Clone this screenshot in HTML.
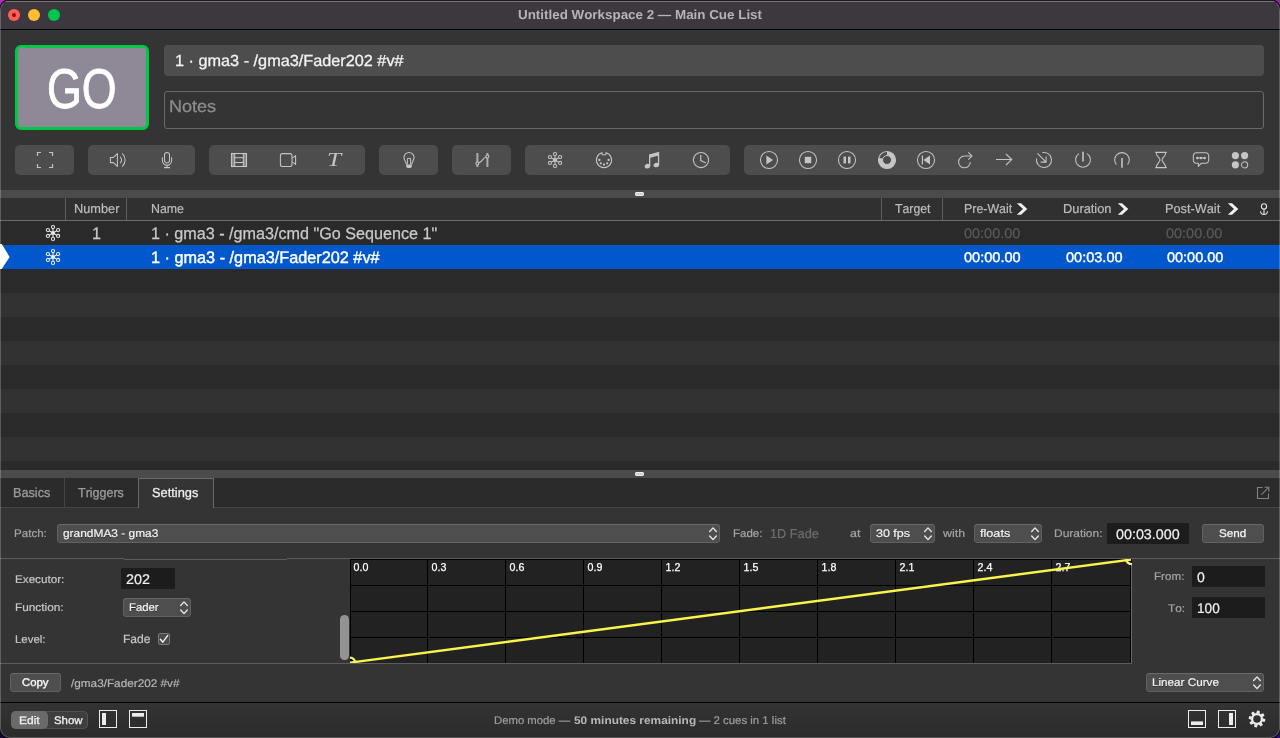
<!DOCTYPE html>
<html lang="en">
<head>
<meta charset="utf-8">
<title>Untitled Workspace 2 — Main Cue List</title>
<style>
*{box-sizing:border-box;margin:0;padding:0}
html,body{width:1280px;height:738px;overflow:hidden;background:#000}
body{font-family:"Liberation Sans",sans-serif;font-size:13px;color:#dcdcdc;position:relative}
.desk{position:absolute;left:0;top:0;width:1280px;height:738px;background:#000}
.desk i{position:absolute;width:14px;height:14px}
.win{position:absolute;left:0;top:0;width:1280px;height:738px;background:#343434;border-radius:10px;overflow:hidden;will-change:transform}
.win div,.win svg,.win span.a{position:absolute}
.edge{position:absolute;left:0;top:0;width:1280px;height:738px;border-radius:10px;border:1px solid rgba(255,255,255,.22);border-top-color:transparent;pointer-events:none;box-shadow:0 0 0 1px rgba(0,0,0,.85)}
.t{white-space:pre;line-height:1;transform-origin:0 50%;text-rendering:geometricPrecision;font-kerning:none}
svg{overflow:visible}
.pop{background:#4e4e4e;border-radius:4px;box-shadow:0 0 0 .5px rgba(255,255,255,.22) inset,0 .5px 0 rgba(255,255,255,.12) inset}
.fld{background:#1c1c1c}
</style>
</head>
<body>
<div class="desk"><i style="left:0;top:0;background:#b12cb6"></i><i style="right:0;top:0;background:#8a2a9a"></i><i style="left:0;bottom:0;background:#160a30"></i><i style="right:0;bottom:0;background:#2a0f6e"></i></div>
<div class="win">
<div style="left:0px;top:0px;width:1280px;height:29px;background:#3d373f;"></div>
<div style="left:0px;top:0px;width:1280px;height:1px;background:#1a1a1a;"></div>
<div style="left:0px;top:1px;width:1280px;height:1px;background:#77727a;"></div>
<div style="left:0px;top:29px;width:1280px;height:1px;background:#000;"></div>
<div style="left:8px;top:9px;width:12px;height:12px;background:#ff5f57;border-radius:50%;"></div>
<div style="left:28px;top:9px;width:12px;height:12px;background:#febc2e;border-radius:50%;"></div>
<div style="left:48px;top:9px;width:12px;height:12px;background:#00c650;border-radius:50%;"></div>
<div style="left:12px;top:13px;width:4px;height:4px;background:#8c0a0a;border-radius:50%;"></div>
<div class="t" style="left:517.80px;top:8.00px;font-size:13px;color:#b7b3b9;font-weight:bold;transform:scaleX(1.0299);">Untitled Workspace 2 — Main Cue List</div>
<div style="left:15px;top:45px;width:134px;height:85px;background:#8f8997;border:3px solid #00c846;border-radius:6px;"></div>
<div class="t" style="left:46.96px;top:61.00px;font-size:56px;color:#fff;transform:scaleX(0.7999);-webkit-text-stroke:0.9px #fff;">GO</div>
<div style="left:164px;top:45px;width:1100px;height:31px;background:#4d4d4d;border-radius:4px;"></div>
<div class="t" style="left:174.78px;top:54.00px;font-size:16px;color:#f2f2f2;transform:scaleX(1.0157);-webkit-text-stroke:0.3px #f2f2f2;">1 · gma3 - /gma3/Fader202 #v#</div>
<div style="left:164px;top:91px;width:1100px;height:38px;border:1px solid #6a6a6a;border-radius:3px;"></div>
<div class="t" style="left:168.66px;top:98.00px;font-size:17px;color:#8c8c8c;transform:scaleX(1.0609);-webkit-text-stroke:0.3px #8c8c8c;">Notes</div>
<div style="left:15px;top:145px;width:59px;height:30px;background:#4d4d4d;border-radius:5px;"></div>
<div style="left:88px;top:145px;width:107px;height:30px;background:#4d4d4d;border-radius:5px;"></div>
<div style="left:209px;top:145px;width:156px;height:30px;background:#4d4d4d;border-radius:5px;"></div>
<div style="left:379px;top:145px;width:59px;height:30px;background:#4d4d4d;border-radius:5px;"></div>
<div style="left:452px;top:145px;width:59px;height:30px;background:#4d4d4d;border-radius:5px;"></div>
<div style="left:525px;top:145px;width:205px;height:30px;background:#4d4d4d;border-radius:5px;"></div>
<div style="left:744px;top:145px;width:520px;height:30px;background:#4d4d4d;border-radius:5px;"></div>
<div class="t" style="left:327.15px;top:150.07px;font-size:20px;color:#c4c4c4;transform:scaleX(1.2727);font-family:'Liberation Serif',serif;font-style:italic;-webkit-text-stroke:0;">T</div>
<svg style="left:33.0px;top:148.0px" width="24" height="24" viewBox="-12.0 -12.0 24 24" fill="none" stroke="#c5c5c5" stroke-width="1.2" stroke-linecap="butt" stroke-linejoin="miter"><path d="M-7.5,-4 V-7.5 H-4 M4,-7.5 H7.5 V-4 M7.5,4 V7.5 H4 M-4,7.5 H-7.5 V4"/></svg>
<svg style="left:106.0px;top:148.0px" width="24" height="24" viewBox="-12.0 -12.0 24 24" fill="none" stroke="#c5c5c5" stroke-width="1.05" stroke-linecap="butt" stroke-linejoin="miter"><path d="M-7.6,-2.6 H-4.6 L-0.6,-6.4 V6.4 L-4.6,2.6 H-7.6 Z" stroke-linejoin="round"/><path d="M2.2,-3.2 A4.5,4.5 0 0 1 2.2,3.2"/><path d="M4.2,-6.6 A9,9 0 0 1 4.2,6.6"/></svg>
<svg style="left:155.0px;top:148.0px" width="24" height="24" viewBox="-12.0 -12.0 24 24" fill="none" stroke="#c5c5c5" stroke-width="1.05" stroke-linecap="butt" stroke-linejoin="miter"><rect x="-2.5" y="-7.5" width="5" height="10.4" rx="2.5"/><path d="M-4.6,-2.8 V0.6 A4.6,4.6 0 0 0 4.6,0.6 V-2.8"/><path d="M0,4.9 V7.6 M-3,7.6 H3"/></svg>
<svg style="left:227.0px;top:148.0px" width="24" height="24" viewBox="-12.0 -12.0 24 24" fill="none" stroke="#c5c5c5" stroke-width="1.05" stroke-linecap="butt" stroke-linejoin="miter"><rect x="-7.5" y="-6.5" width="15" height="13"/><rect x="-7.5" y="-6.5" width="3.2" height="13" fill="#c5c5c5" fill-opacity="0.5" /><rect x="4.3" y="-6.5" width="3.2" height="13" fill="#c5c5c5" fill-opacity="0.5" /><path d="M-4.3,-2.3 H4.3 M-4.3,2.5 H4.3" stroke-width="1"/></svg>
<svg style="left:276.0px;top:148.0px" width="24" height="24" viewBox="-12.0 -12.0 24 24" fill="none" stroke="#c5c5c5" stroke-width="1.05" stroke-linecap="butt" stroke-linejoin="miter"><rect x="-7.6" y="-6.4" width="11.6" height="12.8" rx="2"/><path d="M4.4,-1.8 L7.6,-4.4 V4.4 L4.4,1.8" stroke-linejoin="round"/></svg>
<svg style="left:397.0px;top:148.0px" width="24" height="24" viewBox="-12.0 -12.0 24 24" fill="none" stroke="#c5c5c5" stroke-width="1.05" stroke-linecap="butt" stroke-linejoin="miter"><path d="M-2.6,4.6 C-2.6,2 -5,0.6 -5,-2.6 A5,5 0 0 1 5,-2.6 C5,0.6 2.6,2 2.6,4.6"/><path d="M-2.9,4.6 H2.9 V6 Q2.9,8 0,8 Q-2.9,8 -2.9,6 Z" fill="#c5c5c5" stroke="none"/><path d="M-1.6,4.4 V-1.6 H1.6 V4.4" stroke-width="1"/></svg>
<svg style="left:470.5px;top:148.0px" width="24" height="24" viewBox="-12.0 -12.0 24 24" fill="none" stroke="#c5c5c5" stroke-width="1.05" stroke-linecap="butt" stroke-linejoin="miter"><rect x="-6.6" y="-7" width="2" height="14" fill="#c5c5c5" stroke="none" fill-opacity="0.8"/><rect x="3.4" y="-7" width="2" height="14" fill="#c5c5c5" stroke="none" fill-opacity="0.8"/><path d="M-5.6,3.4 C-1.5,3.4 0.5,-3.6 4.4,-3.6"/><circle cx="-5.6" cy="3.4" r="1.5" fill="#4d4d4d"/><circle cx="4.4" cy="-3.6" r="1.5" fill="#4d4d4d"/></svg>
<svg style="left:543.0px;top:148.0px" width="24" height="24" viewBox="-12.0 -12.0 24 24" fill="none" stroke="#c5c5c5" stroke-width="1.05" stroke-linecap="butt" stroke-linejoin="miter"><path d="M0,0 L0.00,-5.90"/><path d="M0,0 L-5.11,-2.95"/><path d="M0,0 L-5.11,2.95"/><path d="M0,0 L-0.00,5.90"/><path d="M0,0 L5.11,2.95"/><path d="M0,0 L5.11,-2.95"/><circle cx="0.00" cy="-5.90" r="1.60" fill="#4d4d4d"/><circle cx="-5.11" cy="-2.95" r="1.60" fill="#4d4d4d"/><circle cx="-5.11" cy="2.95" r="1.60" fill="#4d4d4d"/><circle cx="-0.00" cy="5.90" r="1.60" fill="#4d4d4d"/><circle cx="5.11" cy="2.95" r="1.60" fill="#4d4d4d"/><circle cx="5.11" cy="-2.95" r="1.60" fill="#4d4d4d"/><circle r="2.00" fill="#c5c5c5" stroke="none"/></svg>
<svg style="left:592.0px;top:148.0px" width="24" height="24" viewBox="-12.0 -12.0 24 24" fill="none" stroke="#c5c5c5" stroke-width="1.05" stroke-linecap="butt" stroke-linejoin="miter"><path d="M-2,-7.3 A7.6,7.6 0 1 0 2,-7.3"/><path d="M-2,-7.8 V-5.2 H2 V-7.8" stroke-width="1"/><g fill="#c5c5c5" stroke="none"><circle cx="-4.6" cy="0" r="1.15"/><circle cx="4.6" cy="0" r="1.15"/><circle cx="-3.2" cy="3.3" r="1.15"/><circle cx="3.2" cy="3.3" r="1.15"/><circle cx="0" cy="4.6" r="1.15"/></g></svg>
<svg style="left:640.0px;top:148.0px" width="24" height="24" viewBox="-12.0 -12.0 24 24" fill="none" stroke="#c5c5c5" stroke-width="1.05" stroke-linecap="butt" stroke-linejoin="miter"><path d="M-3,-5.6 L7.2,-8.2 V5 A2.9,2.2 -15 1 1 5.9,3 V-4.2 L-1.7,-2.3 V6.2 A2.9,2.2 -15 1 1 -3,4.2 Z" fill="#c5c5c5" stroke="none"/></svg>
<svg style="left:689.0px;top:148.0px" width="24" height="24" viewBox="-12.0 -12.0 24 24" fill="none" stroke="#c5c5c5" stroke-width="1.05" stroke-linecap="butt" stroke-linejoin="miter"><circle r="7.6"/><path d="M-1,-5 H0.4 V0 L5.2,2.6 L4.6,3.6 L-1,1 Z" fill="#c5c5c5" stroke="none" fill-opacity="0.85"/></svg>
<svg style="left:757.0px;top:148.0px" width="24" height="24" viewBox="-12.0 -12.0 24 24" fill="none" stroke="#c5c5c5" stroke-width="1.05" stroke-linecap="butt" stroke-linejoin="miter"><circle r="8.55"/><path d="M-2.6,-4.4 L4,0 L-2.6,4.4 Z" fill="#c5c5c5" stroke="none"/></svg>
<svg style="left:796.0px;top:148.0px" width="24" height="24" viewBox="-12.0 -12.0 24 24" fill="none" stroke="#c5c5c5" stroke-width="1.05" stroke-linecap="butt" stroke-linejoin="miter"><circle r="8.55"/><rect x="-3.2" y="-3.2" width="6.4" height="6.4" fill="#c5c5c5" stroke="none"/></svg>
<svg style="left:835.0px;top:148.0px" width="24" height="24" viewBox="-12.0 -12.0 24 24" fill="none" stroke="#c5c5c5" stroke-width="1.05" stroke-linecap="butt" stroke-linejoin="miter"><circle r="8.55"/><rect x="-3.5" y="-3.4" width="2.5" height="6.8" fill="#c5c5c5" stroke="none"/><rect x="1" y="-3.4" width="2.5" height="6.8" fill="#c5c5c5" stroke="none"/></svg>
<svg style="left:875.0px;top:148.0px" width="24" height="24" viewBox="-12.0 -12.0 24 24" fill="none" stroke="#c5c5c5" stroke-width="1.05" stroke-linecap="butt" stroke-linejoin="miter"><circle r="8.55"/><path d="M0,-8.6 A8.6,8.6 0 1 1 -8.2,-2.6 L-4.3,-1.3 A4.5,4.5 0 1 0 0,-4.5 Z" fill="#c5c5c5" stroke="none"/><circle r="4.5" stroke-width="1"/></svg>
<svg style="left:914.0px;top:148.0px" width="24" height="24" viewBox="-12.0 -12.0 24 24" fill="none" stroke="#c5c5c5" stroke-width="1.05" stroke-linecap="butt" stroke-linejoin="miter"><circle r="8.55"/><path d="M4,-4.4 L-2.6,0 L4,4.4 Z" fill="#c5c5c5" stroke="none"/><path d="M-3.6,-4.4 V4.4" stroke-width="1.2"/></svg>
<svg style="left:953.0px;top:148.0px" width="24" height="24" viewBox="-12.0 -12.0 24 24" fill="none" stroke="#c5c5c5" stroke-width="1.05" stroke-linecap="butt" stroke-linejoin="miter"><path d="M5.25,1.9 A5.85,5.85 0 1 1 -0.6,-3.95 H6.8"/><path d="M3.3,-7.6 L7,-3.95 L3.3,-0.4" /></svg>
<svg style="left:992.0px;top:148.0px" width="24" height="24" viewBox="-12.0 -12.0 24 24" fill="none" stroke="#c5c5c5" stroke-width="1.05" stroke-linecap="butt" stroke-linejoin="miter"><path d="M-8,-0.5 H7.6 M2,-6 L7.8,-0.5 L2,5"/></svg>
<svg style="left:1032.0px;top:148.0px" width="24" height="24" viewBox="-12.0 -12.0 24 24" fill="none" stroke="#c5c5c5" stroke-width="1.05" stroke-linecap="butt" stroke-linejoin="miter"><path d="M-1.6,-7.4 A7.55,7.55 0 1 1 -7.4,-1.6"/><path d="M-6.6,-6.6 L1.8,1.8 M2.1,-3.4 V2.1 H-3.4"/></svg>
<svg style="left:1071.0px;top:148.0px" width="24" height="24" viewBox="-12.0 -12.0 24 24" fill="none" stroke="#c5c5c5" stroke-width="1.05" stroke-linecap="butt" stroke-linejoin="miter"><path d="M-4,-6.4 A7.4,7.4 0 1 0 4,-6.4"/><path d="M0,-8.2 V1.6" stroke-width="1.6"/></svg>
<svg style="left:1110.0px;top:148.0px" width="24" height="24" viewBox="-12.0 -12.0 24 24" fill="none" stroke="#c5c5c5" stroke-width="1.05" stroke-linecap="butt" stroke-linejoin="miter"><path d="M-5.6,4.6 A7.3,7.3 0 1 1 5.6,4.6"/><path d="M0,-2 V7.8" stroke-width="1.6"/></svg>
<svg style="left:1149.0px;top:148.0px" width="24" height="24" viewBox="-12.0 -12.0 24 24" fill="none" stroke="#c5c5c5" stroke-width="1.05" stroke-linecap="butt" stroke-linejoin="miter"><path d="M-4.8,-7.5 H4.8 C4.8,-3.4 1,-2.2 1,0 C1,2.2 4.8,3.4 4.8,7.5 H-4.8 C-4.8,3.4 -1,2.2 -1,0 C-1,-2.2 -4.8,-3.4 -4.8,-7.5 Z"/><path d="M-5.6,-7.6 H5.6 M-5.6,7.6 H5.6" stroke-width="1.3"/></svg>
<svg style="left:1189.0px;top:148.0px" width="24" height="24" viewBox="-12.0 -12.0 24 24" fill="none" stroke="#c5c5c5" stroke-width="1.05" stroke-linecap="butt" stroke-linejoin="miter"><path d="M-4.7,-7.2 H4.7 A3,3 0 0 1 7.7,-4.2 V0.2 A3,3 0 0 1 4.7,3.2 H0.4 L-2.6,6.4 V3.2 H-4.7 A3,3 0 0 1 -7.7,0.2 V-4.2 A3,3 0 0 1 -4.7,-7.2 Z" stroke-linejoin="round"/><g fill="#c5c5c5" stroke="none"><circle cx="-3.6" cy="-2" r="1.35"/><circle cx="0" cy="-2" r="1.35"/><circle cx="3.6" cy="-2" r="1.35"/></g><path d="M-3.6,-2 H3.6" stroke-width="0.8"/></svg>
<svg style="left:1228.0px;top:148.0px" width="24" height="24" viewBox="-12.0 -12.0 24 24" fill="none" stroke="#c5c5c5" stroke-width="1.05" stroke-linecap="butt" stroke-linejoin="miter"><g fill="#c5c5c5" stroke="none"><circle cx="-4.6" cy="-4.4" r="3.6"/><circle cx="4.6" cy="-4.4" r="3.6"/><circle cx="-4.6" cy="4.8" r="3.6"/></g><circle cx="4.6" cy="4.8" r="3.1"/></svg>
<div style="left:0px;top:190px;width:1280px;height:8px;background:#4b4b4b;"></div>
<div style="left:635px;top:192px;width:9px;height:4px;background:#cdcdcd;border-radius:2px;box-shadow:0 0 0 .9px #f2f2f2 inset;"></div>
<div style="left:0px;top:198px;width:1280px;height:23px;background:#303030;"></div>
<div style="left:0px;top:220px;width:1280px;height:1px;background:#6c6c6c;"></div>
<div style="left:65px;top:198px;width:1px;height:22px;background:#5e5e5e;"></div>
<div style="left:126px;top:198px;width:1px;height:22px;background:#5e5e5e;"></div>
<div style="left:881px;top:198px;width:1px;height:22px;background:#5e5e5e;"></div>
<div style="left:942px;top:198px;width:1px;height:22px;background:#5e5e5e;"></div>
<div class="t" style="left:73.78px;top:202.00px;font-size:13px;color:#bdbdbd;transform:scaleX(0.9827);-webkit-text-stroke:0.2px;">Number</div>
<div class="t" style="left:151.31px;top:202.00px;font-size:13px;color:#bdbdbd;transform:scaleX(0.9509);-webkit-text-stroke:0.2px;">Name</div>
<div class="t" style="left:894.55px;top:202.00px;font-size:13px;color:#bdbdbd;transform:scaleX(0.9455);-webkit-text-stroke:0.2px;">Target</div>
<div class="t" style="left:963.51px;top:202.00px;font-size:13px;color:#bdbdbd;transform:scaleX(0.9521);-webkit-text-stroke:0.2px;">Pre-Wait</div>
<div class="t" style="left:1062.57px;top:202.00px;font-size:13px;color:#bdbdbd;transform:scaleX(0.9861);-webkit-text-stroke:0.2px;">Duration</div>
<div class="t" style="left:1164.68px;top:202.00px;font-size:13px;color:#bdbdbd;transform:scaleX(0.9794);-webkit-text-stroke:0.2px;">Post-Wait</div>
<svg style="left:1015.0px;top:202.0px" width="14" height="14" viewBox="-7.0 -7.0 14 14" fill="none" stroke="#c5c5c5" stroke-width="1.05" stroke-linecap="butt" stroke-linejoin="miter"><path d="M-5.2,-5.8 H-0.9 L5.3,0 L-0.9,5.8 H-5.2 L1,0 Z" fill="#f0f0f0" stroke="none"/></svg>
<svg style="left:1116.0px;top:202.0px" width="14" height="14" viewBox="-7.0 -7.0 14 14" fill="none" stroke="#c5c5c5" stroke-width="1.05" stroke-linecap="butt" stroke-linejoin="miter"><path d="M-5.2,-5.8 H-0.9 L5.3,0 L-0.9,5.8 H-5.2 L1,0 Z" fill="#f0f0f0" stroke="none"/></svg>
<svg style="left:1226.0px;top:202.0px" width="14" height="14" viewBox="-7.0 -7.0 14 14" fill="none" stroke="#c5c5c5" stroke-width="1.05" stroke-linecap="butt" stroke-linejoin="miter"><path d="M-5.2,-5.8 H-0.9 L5.3,0 L-0.9,5.8 H-5.2 L1,0 Z" fill="#f0f0f0" stroke="none"/></svg>
<svg style="left:1257.0px;top:202.0px" width="14" height="14" viewBox="-7.0 -7.0 14 14" fill="none" stroke="#e4e4e4" stroke-width="1.1" stroke-linecap="butt" stroke-linejoin="miter"><circle cx="0" cy="-2.6" r="2.6"/><path d="M0,0 V5.4 M-3.4,2.2 Q-3.4,5.4 0,5.4 Q3.4,5.4 3.4,2.2"/></svg>
<div style="left:0px;top:221px;width:1280px;height:24px;background:#2a2a2a;"></div>
<div style="left:0px;top:245px;width:1280px;height:24px;background:#0058cc;"></div>
<div style="left:0px;top:269px;width:1280px;height:24px;background:#2a2a2a;"></div>
<div style="left:0px;top:293px;width:1280px;height:24px;background:#323232;"></div>
<div style="left:0px;top:317px;width:1280px;height:24px;background:#2a2a2a;"></div>
<div style="left:0px;top:341px;width:1280px;height:24px;background:#323232;"></div>
<div style="left:0px;top:365px;width:1280px;height:24px;background:#2a2a2a;"></div>
<div style="left:0px;top:389px;width:1280px;height:24px;background:#323232;"></div>
<div style="left:0px;top:413px;width:1280px;height:24px;background:#2a2a2a;"></div>
<div style="left:0px;top:437px;width:1280px;height:24px;background:#323232;"></div>
<div style="left:0px;top:461px;width:1280px;height:9px;background:#2a2a2a;"></div>
<svg style="left:41.0px;top:221.0px" width="24" height="24" viewBox="-12.0 -12.0 24 24" fill="none" stroke="#e6e6e6" stroke-width="1.05" stroke-linecap="butt" stroke-linejoin="miter"><path d="M0,0 L0.00,-5.90"/><path d="M0,0 L-5.11,-2.95"/><path d="M0,0 L-5.11,2.95"/><path d="M0,0 L-0.00,5.90"/><path d="M0,0 L5.11,2.95"/><path d="M0,0 L5.11,-2.95"/><circle cx="0.00" cy="-5.90" r="1.60" fill="#2a2a2a"/><circle cx="-5.11" cy="-2.95" r="1.60" fill="#2a2a2a"/><circle cx="-5.11" cy="2.95" r="1.60" fill="#2a2a2a"/><circle cx="-0.00" cy="5.90" r="1.60" fill="#2a2a2a"/><circle cx="5.11" cy="2.95" r="1.60" fill="#2a2a2a"/><circle cx="5.11" cy="-2.95" r="1.60" fill="#2a2a2a"/><circle r="2.00" fill="#e6e6e6" stroke="none"/></svg>
<div class="t" style="left:91.62px;top:227.00px;font-size:16px;color:#c9c9c9;transform:scale(1.0040,1.0350);-webkit-text-stroke:0.25px #c9c9c9;">1</div>
<div class="t" style="left:151.19px;top:227.00px;font-size:16px;color:#c9c9c9;transform:scale(1.0097,1.0350);-webkit-text-stroke:0.25px #c9c9c9;">1 · gma3 - /gma3/cmd "Go Sequence 1"</div>
<div class="t" style="left:963.82px;top:226.00px;font-size:14px;color:#5a5a5a;transform:scaleX(1.0335);-webkit-text-stroke:0.2px;">00:00.00</div>
<div class="t" style="left:1166.42px;top:226.00px;font-size:14px;color:#5a5a5a;transform:scaleX(1.0335);-webkit-text-stroke:0.2px;">00:00.00</div>
<svg style="left:41.0px;top:245.0px" width="24" height="24" viewBox="-12.0 -12.0 24 24" fill="none" stroke="#eeeeee" stroke-width="1.05" stroke-linecap="butt" stroke-linejoin="miter"><path d="M0,0 L0.00,-5.90"/><path d="M0,0 L-5.11,-2.95"/><path d="M0,0 L-5.11,2.95"/><path d="M0,0 L-0.00,5.90"/><path d="M0,0 L5.11,2.95"/><path d="M0,0 L5.11,-2.95"/><circle cx="0.00" cy="-5.90" r="1.60" fill="#0058cc"/><circle cx="-5.11" cy="-2.95" r="1.60" fill="#0058cc"/><circle cx="-5.11" cy="2.95" r="1.60" fill="#0058cc"/><circle cx="-0.00" cy="5.90" r="1.60" fill="#0058cc"/><circle cx="5.11" cy="2.95" r="1.60" fill="#0058cc"/><circle cx="5.11" cy="-2.95" r="1.60" fill="#0058cc"/><circle r="2.00" fill="#eeeeee" stroke="none"/></svg>
<div class="t" style="left:151.18px;top:251.00px;font-size:16px;color:#fff;transform:scale(1.0157,1.0350);-webkit-text-stroke:0.4px #fff;">1 · gma3 - /gma3/Fader202 #v#</div>
<div class="t" style="left:963.72px;top:250.00px;font-size:14px;color:#fff;transform:scaleX(1.0391);-webkit-text-stroke:0.4px #fff;">00:00.00</div>
<div class="t" style="left:1065.62px;top:250.00px;font-size:14px;color:#fff;transform:scaleX(1.0373);-webkit-text-stroke:0.4px #fff;">00:03.00</div>
<div class="t" style="left:1166.62px;top:250.00px;font-size:14px;color:#fff;transform:scaleX(1.0335);-webkit-text-stroke:0.4px #fff;">00:00.00</div>
<svg style="left:0;top:245px" width="12" height="24" viewBox="0 0 12 24"><path d="M0,-1 H1.8 L9.6,12 L1.8,24 H0 Z" fill="#fff"/></svg>
<div style="left:0px;top:470px;width:1280px;height:8px;background:#4b4b4b;"></div>
<div style="left:635px;top:472px;width:9px;height:4px;background:#cdcdcd;border-radius:2px;box-shadow:0 0 0 .9px #f2f2f2 inset;"></div>
<div style="left:0px;top:478px;width:1280px;height:29px;background:#2b2b2b;"></div>
<div style="left:0px;top:507px;width:1280px;height:1px;background:#454545;"></div>
<div style="left:64px;top:478px;width:1px;height:29px;background:#454545;"></div>
<div style="left:138px;top:478px;width:76px;height:30px;background:#343434;border:1px solid #6a6a6a;border-bottom:none;"></div>
<div class="t" style="left:13.49px;top:486.00px;font-size:13px;color:#9c9c9c;transform:scaleX(0.9758);-webkit-text-stroke:0.3px #9c9c9c;">Basics</div>
<div class="t" style="left:77.65px;top:486.00px;font-size:13px;color:#9c9c9c;transform:scaleX(0.9618);-webkit-text-stroke:0.3px #9c9c9c;">Triggers</div>
<div class="t" style="left:151.72px;top:486.00px;font-size:13px;color:#ededed;transform:scaleX(0.9857);-webkit-text-stroke:0.3px #ededed;">Settings</div>
<svg style="left:1256.0px;top:486.0px" width="14" height="14" viewBox="-7.0 -7.0 14 14" fill="none" stroke="#828282" stroke-width="1.1" stroke-linecap="butt" stroke-linejoin="miter"><path d="M-0.5,-5.5 H-5.5 V5.5 H5.5 V0.5" /><path d="M-1.6,1.6 L5.6,-5.6 M1.6,-5.8 H5.8 V-1.6"/></svg>
<div class="t" style="left:13.57px;top:529.00px;font-size:11px;color:#a4a4a4;transform:scaleX(1.0526);-webkit-text-stroke:0.2px;">Patch:</div>
<div class="pop" style="left:57px;top:524px;width:663px;height:19px;"></div>
<div class="t" style="left:62.52px;top:529.00px;font-size:11px;color:#f4f4f4;transform:scaleX(1.0829);-webkit-text-stroke:0.2px;text-shadow:0 1px 0.5px rgba(0,0,0,.45);">grandMA3 - gma3</div>
<svg style="left:705.4px;top:525.6px" width="16" height="16" viewBox="-8.0 -8.0 16 16" fill="none" stroke="#e8e8e8" stroke-width="1.4" stroke-linecap="butt" stroke-linejoin="miter"><path d="M-3.3,-2.5 L0,-6.1 L3.3,-2.5 M-3.3,2.0 L0,5.6 L3.3,2.0" stroke-linecap="round" stroke-linejoin="round"/></svg>
<div class="t" style="left:732.78px;top:529.00px;font-size:11px;color:#a4a4a4;transform:scaleX(1.0444);-webkit-text-stroke:0.2px;">Fade:</div>
<div class="t" style="left:769.55px;top:527.00px;font-size:13px;color:#6e6e6e;transform:scaleX(0.9794);-webkit-text-stroke:0.2px #6e6e6e;">1D Fade</div>
<div class="t" style="left:850.30px;top:529.00px;font-size:11px;color:#a4a4a4;transform:scaleX(1.1349);-webkit-text-stroke:0.2px;">at</div>
<div class="pop" style="left:870px;top:524px;width:65px;height:19px;"></div>
<div class="t" style="left:875.80px;top:529.00px;font-size:11px;color:#f4f4f4;transform:scaleX(1.1355);-webkit-text-stroke:0.2px;text-shadow:0 1px 0.5px rgba(0,0,0,.45);">30 fps</div>
<svg style="left:920.4px;top:525.6px" width="16" height="16" viewBox="-8.0 -8.0 16 16" fill="none" stroke="#e8e8e8" stroke-width="1.4" stroke-linecap="butt" stroke-linejoin="miter"><path d="M-3.3,-2.5 L0,-6.1 L3.3,-2.5 M-3.3,2.0 L0,5.6 L3.3,2.0" stroke-linecap="round" stroke-linejoin="round"/></svg>
<div class="t" style="left:943.00px;top:529.00px;font-size:11px;color:#a4a4a4;transform:scaleX(1.1271);-webkit-text-stroke:0.2px;">with</div>
<div class="pop" style="left:974px;top:524px;width:68px;height:19px;"></div>
<div class="t" style="left:980.11px;top:529.00px;font-size:11px;color:#f4f4f4;transform:scaleX(1.1500);-webkit-text-stroke:0.2px;text-shadow:0 1px 0.5px rgba(0,0,0,.45);">floats</div>
<svg style="left:1027.4px;top:525.6px" width="16" height="16" viewBox="-8.0 -8.0 16 16" fill="none" stroke="#e8e8e8" stroke-width="1.4" stroke-linecap="butt" stroke-linejoin="miter"><path d="M-3.3,-2.5 L0,-6.1 L3.3,-2.5 M-3.3,2.0 L0,5.6 L3.3,2.0" stroke-linecap="round" stroke-linejoin="round"/></svg>
<div class="t" style="left:1053.64px;top:529.00px;font-size:11px;color:#a4a4a4;transform:scaleX(1.0858);-webkit-text-stroke:0.2px;">Duration:</div>
<div class="fld" style="left:1107px;top:523px;width:82px;height:21px;"></div>
<div class="t" style="left:1115.93px;top:527.00px;font-size:14px;color:#f0f0f0;transform:scaleX(1.0220);-webkit-text-stroke:0.2px;">00:03.000</div>
<div class="pop" style="left:1202px;top:524px;width:62px;height:19px;"></div>
<div class="t" style="left:1219.37px;top:529.00px;font-size:11px;color:#f4f4f4;transform:scaleX(1.0623);-webkit-text-stroke:0.25px #f4f4f4;">Send</div>
<div style="left:0px;top:558px;width:124px;height:1px;background:#5c5c5c;"></div>
<div style="left:124px;top:558.5px;width:163px;height:1px;background:#5c5c5c;"></div>
<div style="left:287px;top:558px;width:993px;height:1px;background:#5c5c5c;"></div>
<div class="t" style="left:14.57px;top:575.00px;font-size:11px;color:#c6c6c6;transform:scaleX(1.0617);-webkit-text-stroke:0.2px;">Executor:</div>
<div class="fld" style="left:121px;top:568px;width:54px;height:21px;"></div>
<div class="t" style="left:125.88px;top:572.00px;font-size:14px;color:#f0f0f0;transform:scaleX(1.0269);-webkit-text-stroke:0.2px;">202</div>
<div class="t" style="left:14.56px;top:603.00px;font-size:11px;color:#c6c6c6;transform:scaleX(1.0729);-webkit-text-stroke:0.2px;">Function:</div>
<div class="pop" style="left:123px;top:598px;width:68px;height:19px;"></div>
<div class="t" style="left:128.70px;top:603.00px;font-size:11px;color:#f4f4f4;transform:scaleX(1.0266);-webkit-text-stroke:0.2px;text-shadow:0 1px 0.5px rgba(0,0,0,.45);">Fader</div>
<svg style="left:176.4px;top:599.6px" width="16" height="16" viewBox="-8.0 -8.0 16 16" fill="none" stroke="#e8e8e8" stroke-width="1.4" stroke-linecap="butt" stroke-linejoin="miter"><path d="M-3.3,-2.5 L0,-6.1 L3.3,-2.5 M-3.3,2.0 L0,5.6 L3.3,2.0" stroke-linecap="round" stroke-linejoin="round"/></svg>
<div class="t" style="left:14.59px;top:635.00px;font-size:11px;color:#c6c6c6;transform:scaleX(1.0384);-webkit-text-stroke:0.2px;">Level:</div>
<div class="t" style="left:122.93px;top:633.00px;font-size:12px;color:#c6c6c6;transform:scaleX(1.0054);-webkit-text-stroke:0.2px;">Fade</div>
<div style="left:158px;top:633px;width:12px;height:12px;background:#4a4a4a;border-radius:3px;box-shadow:0 0 0 .7px rgba(255,255,255,.35) inset;"></div>
<svg style="left:158.0px;top:633.0px" width="12" height="12" viewBox="-6.0 -6.0 12 12" fill="none" stroke="#f4f4f4" stroke-width="1.4" stroke-linecap="butt" stroke-linejoin="miter"><path d="M-3.6,0.3 L-1.2,3.2 L3.6,-3.4" stroke-linecap="round" stroke-linejoin="round"/></svg>
<div style="left:340.3px;top:615px;width:8.6px;height:45px;background:#939393;border-radius:4.3px;"></div>
<svg style="left:350px;top:559px;overflow:hidden" width="782" height="104" viewBox="0 0 782 104"><rect x="0" y="0" width="782" height="104" fill="#222"/><g stroke="#000" stroke-width="1" shape-rendering="crispEdges"><path d="M0.5,0 V104"/><path d="M77.5,0 V104"/><path d="M155.5,0 V104"/><path d="M233.5,0 V104"/><path d="M311.5,0 V104"/><path d="M389.5,0 V104"/><path d="M467.5,0 V104"/><path d="M545.5,0 V104"/><path d="M623.5,0 V104"/><path d="M701.5,0 V104"/><path d="M780.5,0 V104"/><path d="M0,0.5 H781"/><path d="M0,26.5 H781"/><path d="M0,52.5 H781"/><path d="M0,78.5 H781"/></g><path d="M781.5,0 V104" stroke="#6a6a6a" stroke-width="1" shape-rendering="crispEdges"/><g font-family="Liberation Sans, sans-serif" font-size="11" fill="#fff" stroke="#fff" stroke-width="0.25"><text x="3.5" y="12.1" textLength="14.8" lengthAdjust="spacingAndGlyphs">0.0</text><text x="81.6" y="12.1" textLength="14.8" lengthAdjust="spacingAndGlyphs">0.3</text><text x="159.6" y="12.1" textLength="14.8" lengthAdjust="spacingAndGlyphs">0.6</text><text x="237.6" y="12.1" textLength="14.8" lengthAdjust="spacingAndGlyphs">0.9</text><text x="315.6" y="12.1" textLength="14.8" lengthAdjust="spacingAndGlyphs">1.2</text><text x="393.6" y="12.1" textLength="14.8" lengthAdjust="spacingAndGlyphs">1.5</text><text x="471.6" y="12.1" textLength="14.8" lengthAdjust="spacingAndGlyphs">1.8</text><text x="549.6" y="12.1" textLength="14.8" lengthAdjust="spacingAndGlyphs">2.1</text><text x="627.6" y="12.1" textLength="14.8" lengthAdjust="spacingAndGlyphs">2.4</text><text x="705.6" y="12.1" textLength="14.8" lengthAdjust="spacingAndGlyphs">2.7</text></g><svg x="0" y="0" width="781" height="104" overflow="hidden"><circle cx="0" cy="104" r="5.4" stroke="#f0f08c" stroke-width="2.2" fill="#04041e"/><circle cx="781.5" cy="-0.5" r="5.6" stroke="#f0f08c" stroke-width="2.4" fill="#04041e"/><path d="M0,103.6 L781,0.6" stroke="#f8f44c" stroke-width="2.4" fill="none"/></svg></svg>
<div class="t" style="left:1153.67px;top:572.00px;font-size:11px;color:#a4a4a4;transform:scaleX(1.0581);-webkit-text-stroke:0.2px;">From:</div>
<div class="fld" style="left:1192px;top:566px;width:73px;height:21px;"></div>
<div class="t" style="left:1196.94px;top:570.00px;font-size:14px;color:#f0f0f0;transform:scaleX(1.0040);-webkit-text-stroke:0.2px;">0</div>
<div class="t" style="left:1168.36px;top:604.00px;font-size:11px;color:#a4a4a4;transform:scaleX(1.0730);-webkit-text-stroke:0.2px;">To:</div>
<div class="fld" style="left:1192px;top:597px;width:73px;height:21px;"></div>
<div class="t" style="left:1196.98px;top:601.00px;font-size:14px;color:#f0f0f0;transform:scaleX(0.9738);-webkit-text-stroke:0.2px;">100</div>
<div style="left:0px;top:663px;width:1132px;height:1px;background:#5c5c5c;"></div>
<div class="pop" style="left:10px;top:673px;width:51px;height:19px;"></div>
<div class="t" style="left:21.53px;top:678.00px;font-size:11px;color:#f4f4f4;transform:scaleX(1.0344);-webkit-text-stroke:0.4px #f4f4f4;">Copy</div>
<div class="t" style="left:71.00px;top:679.00px;font-size:11px;color:#b4b4b4;transform:scaleX(1.0688);-webkit-text-stroke:0.2px;">/gma3/Fader202 #v#</div>
<div class="pop" style="left:1146px;top:673px;width:118px;height:19px;"></div>
<div class="t" style="left:1151.86px;top:678.00px;font-size:11px;color:#f4f4f4;transform:scaleX(1.0633);-webkit-text-stroke:0.2px;text-shadow:0 1px 0.5px rgba(0,0,0,.45);">Linear Curve</div>
<svg style="left:1249.4px;top:674.6px" width="16" height="16" viewBox="-8.0 -8.0 16 16" fill="none" stroke="#e8e8e8" stroke-width="1.4" stroke-linecap="butt" stroke-linejoin="miter"><path d="M-3.3,-2.5 L0,-6.1 L3.3,-2.5 M-3.3,2.0 L0,5.6 L3.3,2.0" stroke-linecap="round" stroke-linejoin="round"/></svg>
<div style="left:0px;top:702px;width:1280px;height:1px;background:#000;"></div>
<div style="left:0px;top:703px;width:1280px;height:35px;background:linear-gradient(#333333,#2b2b2b);"></div>
<div style="left:10.5px;top:711px;width:77.2px;height:18px;background:#3e3e3e;border-radius:5px;box-shadow:0 0 0 .6px rgba(255,255,255,.2) inset;"></div>
<div style="left:10.5px;top:711px;width:37.2px;height:18px;background:#6a6a6a;border-radius:5px;"></div>
<div class="t" style="left:18.64px;top:716.00px;font-size:11px;color:#f0f0f0;transform:scaleX(1.0898);-webkit-text-stroke:0.3px #f0f0f0;">Edit</div>
<div class="t" style="left:53.79px;top:716.00px;font-size:11px;color:#f0f0f0;transform:scaleX(1.0384);-webkit-text-stroke:0.3px #f0f0f0;">Show</div>
<svg style="left:98.0px;top:709.0px" width="20" height="20" viewBox="-10.0 -10.0 20 20" fill="none" stroke="#ececec" stroke-width="1" stroke-linecap="butt" stroke-linejoin="miter"><rect x="-8.5" y="-8.5" width="17" height="17"/><rect x="-6" y="-6" width="4" height="12" fill="#ececec" stroke="none"/></svg>
<svg style="left:128.0px;top:709.0px" width="20" height="20" viewBox="-10.0 -10.0 20 20" fill="none" stroke="#ececec" stroke-width="1" stroke-linecap="butt" stroke-linejoin="miter"><rect x="-8.5" y="-8.5" width="17" height="17"/><rect x="-6" y="-6" width="12" height="3.7" fill="#ececec" stroke="none"/></svg>
<svg style="left:1187.0px;top:709.0px" width="20" height="20" viewBox="-10.0 -10.0 20 20" fill="none" stroke="#ececec" stroke-width="1" stroke-linecap="butt" stroke-linejoin="miter"><rect x="-8.5" y="-8.5" width="17" height="17"/><rect x="-6" y="2.4" width="12" height="3.6" fill="#ececec" stroke="none"/></svg>
<svg style="left:1217.0px;top:709.0px" width="20" height="20" viewBox="-10.0 -10.0 20 20" fill="none" stroke="#ececec" stroke-width="1" stroke-linecap="butt" stroke-linejoin="miter"><rect x="-8.5" y="-8.5" width="17" height="17"/><rect x="2" y="-6" width="4" height="12" fill="#ececec" stroke="none"/></svg>
<svg style="left:1247.0px;top:709.0px" width="20" height="20" viewBox="-10.0 -10.0 20 20" fill="none" stroke="#ececec" stroke-width="1" stroke-linecap="butt" stroke-linejoin="miter"><path d="M-1.8,-5.6 L-1.3,-8.3 H1.3 L1.8,-5.6 Z" transform="rotate(10)" fill="#ececec" stroke="none"/><path d="M-1.8,-5.6 L-1.3,-8.3 H1.3 L1.8,-5.6 Z" transform="rotate(55)" fill="#ececec" stroke="none"/><path d="M-1.8,-5.6 L-1.3,-8.3 H1.3 L1.8,-5.6 Z" transform="rotate(100)" fill="#ececec" stroke="none"/><path d="M-1.8,-5.6 L-1.3,-8.3 H1.3 L1.8,-5.6 Z" transform="rotate(145)" fill="#ececec" stroke="none"/><path d="M-1.8,-5.6 L-1.3,-8.3 H1.3 L1.8,-5.6 Z" transform="rotate(190)" fill="#ececec" stroke="none"/><path d="M-1.8,-5.6 L-1.3,-8.3 H1.3 L1.8,-5.6 Z" transform="rotate(235)" fill="#ececec" stroke="none"/><path d="M-1.8,-5.6 L-1.3,-8.3 H1.3 L1.8,-5.6 Z" transform="rotate(280)" fill="#ececec" stroke="none"/><path d="M-1.8,-5.6 L-1.3,-8.3 H1.3 L1.8,-5.6 Z" transform="rotate(325)" fill="#ececec" stroke="none"/><circle r="4.9" stroke-width="2.3"/></svg>
<div class="t" style="left:493.84px;top:716.00px;font-size:11px;color:#9e9e9e;transform:scaleX(1.0288);-webkit-text-stroke:0.2px;">Demo mode —</div>
<div class="t" style="left:573.64px;top:716.00px;font-size:11px;color:#b8b8b8;font-weight:bold;transform:scaleX(1.0800);">50 minutes remaining</div>
<div class="t" style="left:698.80px;top:716.00px;font-size:11px;color:#9e9e9e;transform:scaleX(1.0364);-webkit-text-stroke:0.2px;">— 2 cues in 1 list</div>
</div>
<div class="edge"></div>
</body>
</html>
